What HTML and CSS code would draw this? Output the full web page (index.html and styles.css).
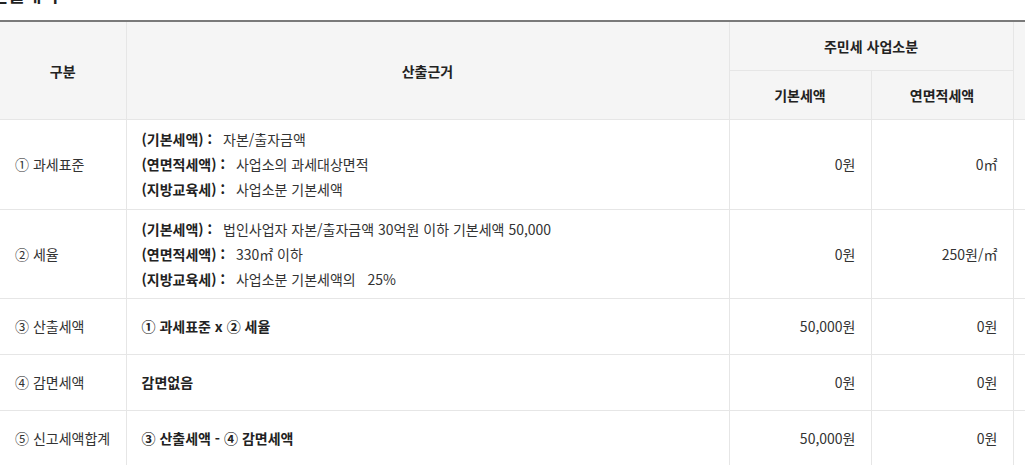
FILE: index.html
```html
<!DOCTYPE html>
<html lang="ko">
<head>
    <meta charset="UTF-8">
    <meta name="viewport" content="width=device-width, initial-scale=1.0">
    <title>주민세 사업소분 산출내역</title>
    <link rel="stylesheet" href="styles.css">
</head>
<body>
    <div class="wrap">
        <h3 class="title">산출내역</h3>

        <table class="calc">
            <colgroup>
                <col class="c-gubun">
                <col class="c-basis">
                <col class="c-amt">
                <col class="c-amt">
                <col class="c-sum">
            </colgroup>
            <thead>
                <tr>
                    <th rowspan="2">구분</th>
                    <th rowspan="2">산출근거</th>
                    <th colspan="2">주민세 사업소분</th>
                    <th rowspan="2">합계</th>
                </tr>
                <tr>
                    <th>기본세액</th>
                    <th>연면적세액</th>
                </tr>
            </thead>
            <tbody>
                <tr>
                    <td>① 과세표준</td>
                    <td class="multi">
                        <p><b>(기본세액) :</b> <span>자본/출자금액</span></p>
                        <p><b>(연면적세액) :</b> <span>사업소의 과세대상면적</span></p>
                        <p><b>(지방교육세) :</b> <span>사업소분 기본세액</span></p>
                    </td>
                    <td class="num">0원</td>
                    <td class="num">0㎡</td>
                    <td class="num">0원</td>
                </tr>
                <tr>
                    <td>② 세율</td>
                    <td class="multi tight">
                        <p><b>(기본세액) :</b> <span>법인사업자 자본/출자금액 30억원 이하 기본세액 50,000</span></p>
                        <p><b>(연면적세액) :</b> <span>330㎡ 이하</span></p>
                        <p><b>(지방교육세) :</b> <span>사업소분 기본세액의 &nbsp;&nbsp;25%</span></p>
                    </td>
                    <td class="num">0원</td>
                    <td class="num">250원/㎡</td>
                    <td class="num">0원</td>
                </tr>
                <tr>
                    <td>③ 산출세액</td>
                    <td><b>① 과세표준 x ② 세율</b></td>
                    <td class="num">50,000원</td>
                    <td class="num">0원</td>
                    <td class="num">50,000원</td>
                </tr>
                <tr>
                    <td>④ 감면세액</td>
                    <td><b>감면없음</b></td>
                    <td class="num">0원</td>
                    <td class="num">0원</td>
                    <td class="num">0원</td>
                </tr>
                <tr>
                    <td>⑤ 신고세액합계</td>
                    <td><b>③ 산출세액 - ④ 감면세액</b></td>
                    <td class="num">50,000원</td>
                    <td class="num">0원</td>
                    <td class="num">50,000원</td>
                </tr>
            </tbody>
        </table>
    </div>
</body>
</html>
```

FILE: styles.css
```css
html, body {
    margin: 0;
    padding: 0;
    overflow: hidden;
    background: #fff;
}

body {
    font-family: "Noto Sans CJK KR", "Noto Sans", sans-serif;
    font-size: 14px;
    color: #333;
}

.wrap {
    width: 1240px;
}

/* 상단 제목 (스크롤로 잘린 상태) */
.title {
    margin: -19px 0 12px -8px;
    font-size: 18px;
    line-height: 27px;
    font-weight: bold;
    color: #222;
}

/* 산출내역 표 */
.calc {
    width: 1213px;
    table-layout: fixed;
    border-collapse: collapse;
    border-top: 2px solid #7a7a7a;
}

.calc .c-gubun { width: 126px; }
.calc .c-basis { width: 603px; }
.calc .c-amt { width: 142px; }
.calc .c-sum { width: 200px; }

.calc th, .calc td {
    border: 1px solid #e6e6e6;
    line-height: 25px;
}

.calc tr > :first-child { border-left: 0; }

.calc th {
    padding: 12px 15px 11px;
    background: #f5f5f5;
    font-weight: bold;
    color: #222;
}

.calc td {
    padding: 15px 15px;
    text-align: left;
    vertical-align: middle;
}

.calc td.multi {
    padding: 7px 15px;
}

.calc td.multi.tight {
    padding-bottom: 6px;
}

.calc td b {
    color: #222;
}

.calc p {
    margin: 0;
}

.calc p span {
    margin-left: 7px;
}

.calc td.num {
    text-align: right;
}
```
